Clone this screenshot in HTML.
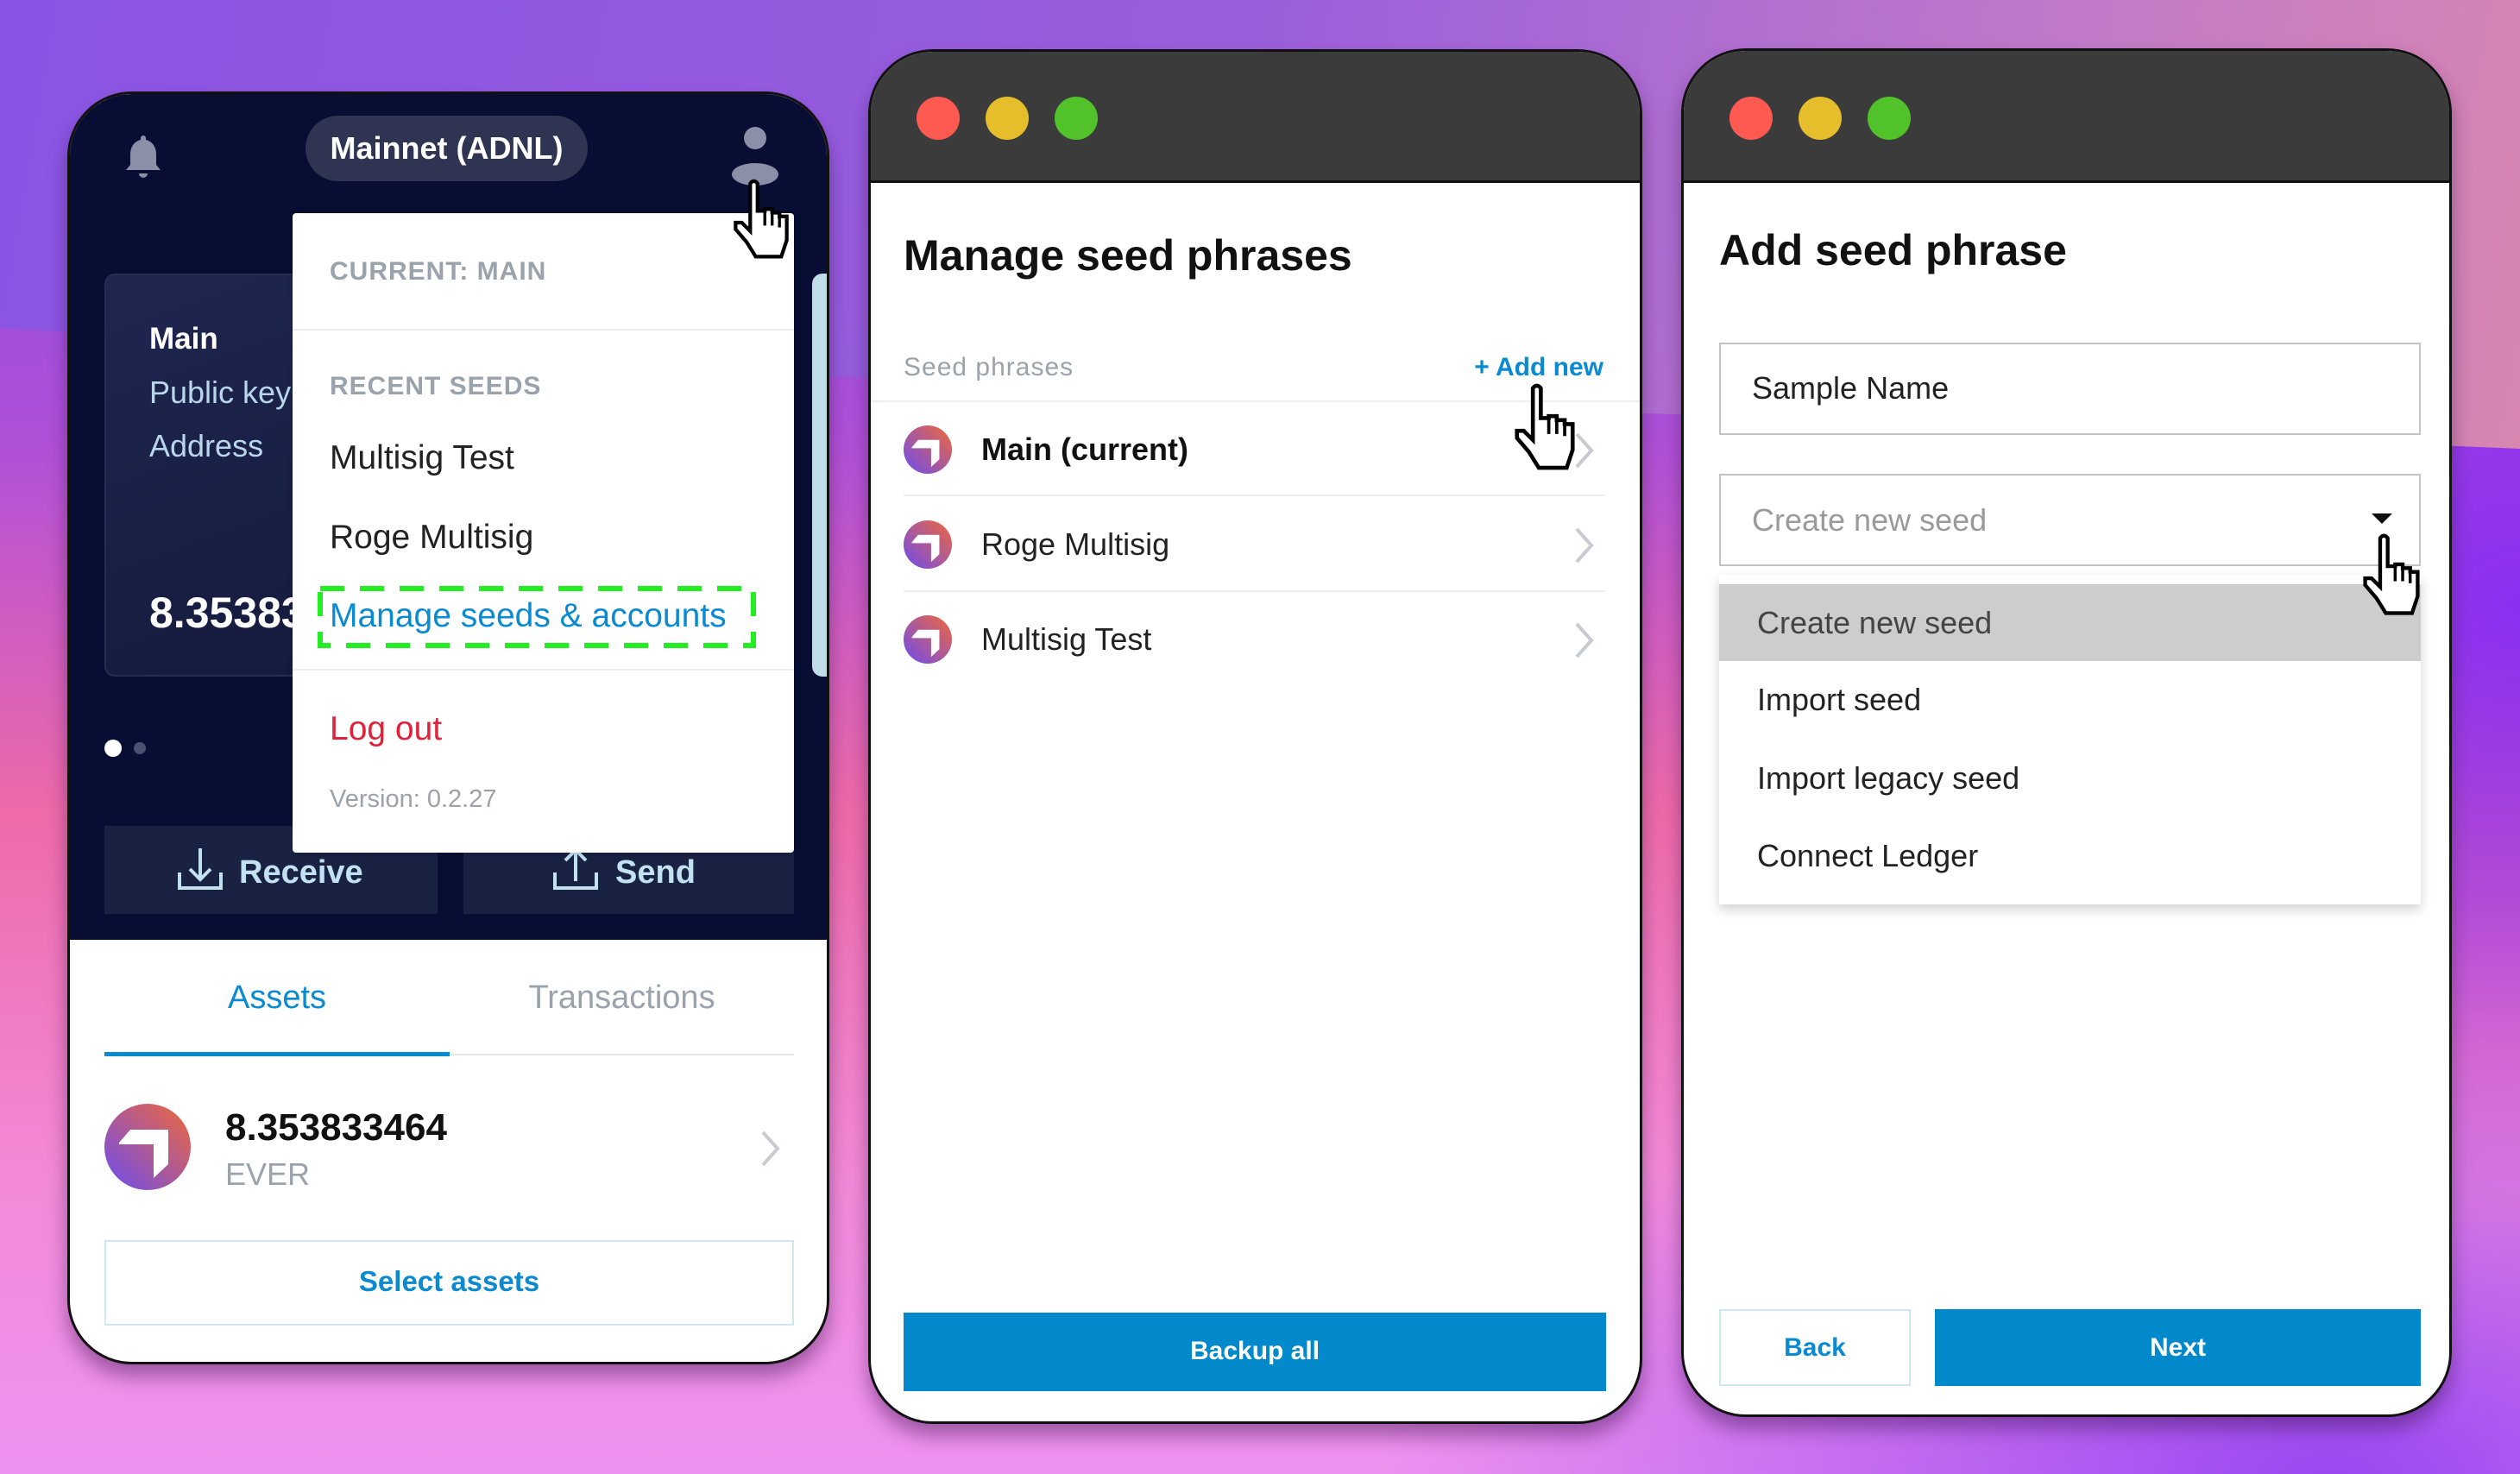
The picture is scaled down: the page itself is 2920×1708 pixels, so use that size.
<!DOCTYPE html>
<html><head><meta charset="utf-8">
<style>
*{margin:0;padding:0;box-sizing:border-box}
body{width:2920px;height:1708px;overflow:hidden;position:relative;font-family:"Liberation Sans",sans-serif;background:#8e58e2}
.abs{position:absolute}
.t{position:absolute;white-space:nowrap;line-height:1}
.win{position:absolute;background:#fff;border:3px solid #111;overflow:hidden;box-shadow:0 14px 22px rgba(60,20,80,.45)}
.bar{position:absolute;left:0;right:0;top:0;background:#3b3b3b;border-bottom:3px solid #111}
.dot{position:absolute;width:50px;height:50px;border-radius:50%}
.chev{position:absolute}
</style></head><body>
<div class="abs" style="left:0;top:0;width:2920px;height:1708px;background:linear-gradient(100deg,#8a55e4 0%,#9a5edc 45%,#c07ac8 75%,#e08aa8 100%)"></div>
<div class="abs" style="left:0;top:0;width:2920px;height:1708px;clip-path:polygon(0 380px,1200px 450px,2920px 520px,2920px 1708px,0 1708px);background:linear-gradient(180deg,#7a4cea 0%,#b050d8 30%,#ee6aa8 55%,#f28ad8 80%,#ee92f0 100%)"></div>
<div class="abs" style="left:0;top:0;width:2920px;height:1708px;clip-path:polygon(0 380px,1200px 450px,2920px 520px,2920px 1708px,0 1708px);background:radial-gradient(ellipse 900px 700px at 2920px 700px,#8a30f0 0%,rgba(140,50,240,.6) 50%,rgba(140,50,240,0) 100%),radial-gradient(ellipse 1100px 500px at 2700px 1708px,#9a48f2 0%,rgba(150,70,240,0) 100%)"></div>

<div class="win" style="left:78px;top:106px;width:883px;height:1475px;border-radius:75px;background:#fff">
  <div class="abs" style="left:0;top:0;width:883px;height:980px;background:#080d33"></div>
  <svg class="abs" style="left:62px;top:46px" width="46" height="54" viewBox="0 0 46 54"><path d="M23 2a3 3 0 0 1 3 3v2c8 2 12 9 12 17v12l5 6H3l5-6V24c0-8 4-15 12-17V5a3 3 0 0 1 3-3z" fill="#8b8fa8"/><path d="M18 46h10a5 5 0 0 1-10 0z" fill="#8b8fa8"/></svg>
  <div class="abs" style="left:273px;top:25px;width:327px;height:76px;border-radius:38px;background:#2e3452"></div>
  <div class="t" style="left:273px;top:45px;width:327px;text-align:center;color:#fff;font-size:36px;font-weight:bold">Mainnet (ADNL)</div>
  <svg class="abs" style="left:765px;top:38px" width="58" height="68" viewBox="0 0 58 68"><circle cx="29" cy="13" r="13" fill="#8b8fa8"/><ellipse cx="29" cy="55" rx="27" ry="13" fill="#8b8fa8"/></svg>
  <div class="abs" style="left:40px;top:208px;width:400px;height:467px;border-radius:12px;background:linear-gradient(160deg,#1f2650,#141a3c);border:2px solid #262d52"></div>
  <div class="abs" style="left:860px;top:208px;width:30px;height:467px;border-radius:12px;background:#bfdde9"></div>
  <div class="t" style="left:92px;top:266px;color:#fff;font-size:35px;font-weight:bold">Main</div>
  <div class="t" style="left:92px;top:328px;color:#b9d6ea;font-size:36px">Public key</div>
  <div class="t" style="left:92px;top:390px;color:#b9d6ea;font-size:36px">Address</div>
  <div class="t" style="left:92px;top:576px;color:#fff;font-size:50px;font-weight:bold">8.353833464</div>
  <div class="abs" style="left:40px;top:748px;width:20px;height:20px;border-radius:50%;background:#fff"></div>
  <div class="abs" style="left:74px;top:751px;width:14px;height:14px;border-radius:50%;background:#4a5070"></div>
  <div class="abs" style="left:40px;top:848px;width:386px;height:102px;background:#1a2244"></div>
  <div class="abs" style="left:456px;top:848px;width:383px;height:102px;background:#1a2244"></div>
  <svg class="abs" style="left:125px;top:872px" width="52" height="52" viewBox="0 0 52 52"><path d="M26 2v36M14 26l12 12 12-12M2 30v18h48V30" fill="none" stroke="#c2e2f2" stroke-width="4"/></svg>
  <div class="t" style="left:196px;top:883px;color:#c2e2f2;font-size:38px;font-weight:bold">Receive</div>
  <svg class="abs" style="left:560px;top:872px" width="52" height="52" viewBox="0 0 52 52"><path d="M26 40V4M14 16L26 4l12 12M2 30v18h48V30" fill="none" stroke="#c2e2f2" stroke-width="4"/></svg>
  <div class="t" style="left:632px;top:883px;color:#c2e2f2;font-size:38px;font-weight:bold">Send</div>
  <div class="t" style="left:40px;top:1028px;width:400px;text-align:center;color:#0a8ad0;font-size:38px">Assets</div>
  <div class="t" style="left:440px;top:1028px;width:399px;text-align:center;color:#9aa2ab;font-size:38px">Transactions</div>
  <div class="abs" style="left:40px;top:1112px;width:799px;height:2px;background:#e6e9ec"></div>
  <div class="abs" style="left:40px;top:1110px;width:400px;height:5px;background:#0a8ad0"></div>
  <svg class="abs" style="left:40px;top:1170px" width="100" height="100" viewBox="0 0 100 100"><defs><linearGradient id="g1" x1="0" y1="1" x2="1" y2="0"><stop offset="0" stop-color="#6d4cf0"/><stop offset="1" stop-color="#f0683a"/></linearGradient></defs><ellipse cx="50" cy="50" rx="50" ry="50" fill="url(#g1)"/><path d="M17 45L30 30H74V70L57 86V47H17Z" fill="#fff"/></svg>
  <div class="t" style="left:180px;top:1176px;color:#111;font-size:44px;font-weight:bold">8.353833464</div>
  <div class="t" style="left:180px;top:1234px;color:#9aa2ab;font-size:36px">EVER</div>
  <svg class="chev" style="left:800px;top:1200px" width="24" height="44" viewBox="0 0 24 44"><path d="M3 3l17 19L3 41" fill="none" stroke="#c8ccd0" stroke-width="4"/></svg>
  <div class="abs" style="left:40px;top:1328px;width:799px;height:99px;border:2px solid #cfe6f3"></div>
  <div class="t" style="left:40px;top:1359px;width:799px;text-align:center;color:#0a8ad0;font-size:33px;font-weight:bold">Select assets</div>
  <div class="abs" style="left:258px;top:138px;width:581px;height:741px;background:#fff;border-radius:4px;box-shadow:0 2px 8px rgba(0,0,0,.15)"></div>
  <div class="t" style="left:301px;top:191px;color:#9aa2ab;font-size:30px;font-weight:bold;letter-spacing:1px">CURRENT: MAIN</div>
  <div class="abs" style="left:258px;top:272px;width:581px;height:2px;background:#eceef0"></div>
  <div class="t" style="left:301px;top:324px;color:#9aa2ab;font-size:30px;font-weight:bold;letter-spacing:1px">RECENT SEEDS</div>
  <div class="t" style="left:301px;top:402px;color:#222;font-size:39px">Multisig Test</div>
  <div class="t" style="left:301px;top:494px;color:#222;font-size:39px">Roge Multisig</div>
  <svg class="abs" style="left:287px;top:570px" width="508" height="72" viewBox="0 0 508 72"><rect x="3" y="3" width="502" height="66" fill="none" stroke="#22ee22" stroke-width="6" stroke-dasharray="28 18"/></svg>
  <div class="t" style="left:301px;top:585px;color:#0a8ad0;font-size:39px">Manage seeds &amp; accounts</div>
  <div class="abs" style="left:258px;top:666px;width:581px;height:2px;background:#eceef0"></div>
  <div class="t" style="left:301px;top:716px;color:#e0213a;font-size:39px">Log out</div>
  <div class="t" style="left:301px;top:803px;color:#9aa2ab;font-size:29px">Version: 0.2.27</div>
  <svg class="abs" style="left:765px;top:97px" width="72" height="98" viewBox="0 0 17 23"><path d="M5.5 1.5Q6.5 0.2 7.5 1.5V9H9.5V8.5H11.5V9.5H13.5V10.5H15.5V17L14 21.5H7L4.5 17.5L1.5 14V12.2H3.2L5.5 14.5Z" fill="#fff" stroke="#000" stroke-width="1"/><path d="M9.5 9v4M11.5 9.5v3.5M13.5 10.5v3" stroke="#000" stroke-width=".8"/></svg>
</div>

<div class="win" style="left:1006px;top:57px;width:897px;height:1593px;border-radius:75px">
  <div class="bar" style="height:152px"></div>
  <div class="dot" style="left:53px;top:52px;background:#fe5a52"></div>
  <div class="dot" style="left:133px;top:52px;background:#e6bd2a"></div>
  <div class="dot" style="left:213px;top:52px;background:#52c22b"></div>
  <div class="t" style="left:38px;top:211px;color:#111;font-size:50px;font-weight:bold">Manage seed phrases</div>
  <div class="t" style="left:38px;top:351px;color:#9aa2ab;font-size:30px;letter-spacing:1px">Seed phrases</div>
  <div class="t" style="right:42px;top:351px;color:#0a8ad0;font-size:30px;font-weight:bold">+ Add new</div>
  <div class="abs" style="left:0;top:404px;width:897px;height:2px;background:#eceef0"></div>
  <div class="abs" style="left:38px;top:513px;width:813px;height:2px;background:#eceef0"></div>
  <div class="abs" style="left:38px;top:624px;width:813px;height:2px;background:#eceef0"></div>
  <svg class="abs" style="left:38px;top:433px" width="56" height="56" viewBox="0 0 100 100"><defs><linearGradient id="g2" x1="0" y1="1" x2="1" y2="0"><stop offset="0" stop-color="#6d4cf0"/><stop offset="1" stop-color="#f0683a"/></linearGradient></defs><circle cx="50" cy="50" r="50" fill="url(#g2)"/><path d="M17 45L30 30H74V70L57 86V47H17Z" fill="#fff"/></svg>
  <svg class="abs" style="left:38px;top:543px" width="56" height="56" viewBox="0 0 100 100"><circle cx="50" cy="50" r="50" fill="url(#g2)"/><path d="M17 45L30 30H74V70L57 86V47H17Z" fill="#fff"/></svg>
  <svg class="abs" style="left:38px;top:653px" width="56" height="56" viewBox="0 0 100 100"><circle cx="50" cy="50" r="50" fill="url(#g2)"/><path d="M17 45L30 30H74V70L57 86V47H17Z" fill="#fff"/></svg>
  <div class="t" style="left:128px;top:443px;color:#111;font-size:36px;font-weight:bold">Main (current)</div>
  <div class="t" style="left:128px;top:553px;color:#222;font-size:36px">Roge Multisig</div>
  <div class="t" style="left:128px;top:663px;color:#222;font-size:36px">Multisig Test</div>
  <svg class="chev" style="left:815px;top:440px" width="24" height="44" viewBox="0 0 24 44"><path d="M3 3l17 19L3 41" fill="none" stroke="#c8ccd0" stroke-width="4"/></svg>
  <svg class="chev" style="left:815px;top:550px" width="24" height="44" viewBox="0 0 24 44"><path d="M3 3l17 19L3 41" fill="none" stroke="#c8ccd0" stroke-width="4"/></svg>
  <svg class="chev" style="left:815px;top:660px" width="24" height="44" viewBox="0 0 24 44"><path d="M3 3l17 19L3 41" fill="none" stroke="#c8ccd0" stroke-width="4"/></svg>
  <svg class="abs" style="left:741px;top:383px" width="80" height="106" viewBox="0 0 17 23"><path d="M5.5 1.5Q6.5 0.2 7.5 1.5V9H9.5V8.5H11.5V9.5H13.5V10.5H15.5V17L14 21.5H7L4.5 17.5L1.5 14V12.2H3.2L5.5 14.5Z" fill="#fff" stroke="#000" stroke-width="1"/><path d="M9.5 9v4M11.5 9.5v3.5M13.5 10.5v3" stroke="#000" stroke-width=".8"/></svg>
  <div class="abs" style="left:38px;top:1461px;width:814px;height:91px;background:#0289cc"></div>
  <div class="t" style="left:38px;top:1491px;width:814px;text-align:center;color:#fff;font-size:30px;font-weight:bold">Backup all</div>
</div>

<div class="win" style="left:1948px;top:56px;width:893px;height:1586px;border-radius:75px">
  <div class="bar" style="height:153px"></div>
  <div class="dot" style="left:53px;top:53px;background:#fe5a52"></div>
  <div class="dot" style="left:133px;top:53px;background:#e6bd2a"></div>
  <div class="dot" style="left:213px;top:53px;background:#52c22b"></div>
  <div class="t" style="left:41px;top:206px;color:#111;font-size:50px;font-weight:bold">Add seed phrase</div>
  <div class="abs" style="left:41px;top:338px;width:813px;height:107px;border:2px solid #c4c4c4"></div>
  <div class="t" style="left:79px;top:373px;color:#222;font-size:36px">Sample Name</div>
  <div class="abs" style="left:41px;top:490px;width:813px;height:107px;border:2px solid #c4c4c4"></div>
  <div class="t" style="left:79px;top:526px;color:#9a9a9a;font-size:36px">Create new seed</div>
  <svg class="abs" style="left:797px;top:536px" width="24" height="12" viewBox="0 0 24 12"><path d="M0 0h24L12 12z" fill="#111"/></svg>
  <div class="abs" style="left:41px;top:607px;width:813px;height:382px;background:#fff;box-shadow:0 6px 12px rgba(0,0,0,.18)"></div>
  <div class="abs" style="left:41px;top:618px;width:813px;height:89px;background:#cdcdcd"></div>
  <div class="t" style="left:85px;top:645px;color:#444;font-size:36px">Create new seed</div>
  <div class="t" style="left:85px;top:734px;color:#222;font-size:36px">Import seed</div>
  <div class="t" style="left:85px;top:825px;color:#222;font-size:36px">Import legacy seed</div>
  <div class="t" style="left:85px;top:915px;color:#222;font-size:36px">Connect Ledger</div>
  <svg class="abs" style="left:782px;top:558px" width="76" height="100" viewBox="0 0 17 23"><path d="M5.5 1.5Q6.5 0.2 7.5 1.5V9H9.5V8.5H11.5V9.5H13.5V10.5H15.5V17L14 21.5H7L4.5 17.5L1.5 14V12.2H3.2L5.5 14.5Z" fill="#fff" stroke="#000" stroke-width="1"/><path d="M9.5 9v4M11.5 9.5v3.5M13.5 10.5v3" stroke="#000" stroke-width=".8"/></svg>
  <div class="abs" style="left:41px;top:1458px;width:222px;height:89px;border:2px solid #cfe6f3"></div>
  <div class="t" style="left:41px;top:1488px;width:222px;text-align:center;color:#0a8ad0;font-size:30px;font-weight:bold">Back</div>
  <div class="abs" style="left:291px;top:1458px;width:563px;height:89px;background:#0289cc"></div>
  <div class="t" style="left:291px;top:1488px;width:563px;text-align:center;color:#fff;font-size:30px;font-weight:bold">Next</div>
</div>
</body></html>
